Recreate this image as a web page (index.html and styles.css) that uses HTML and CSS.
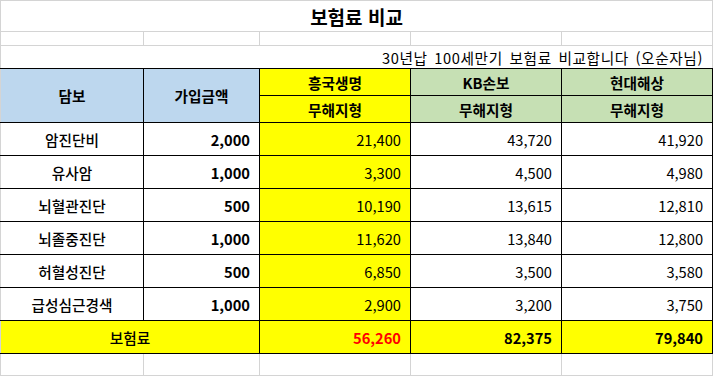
FILE: index.html
```html
<!DOCTYPE html>
<html lang="ko">
<head>
  <meta charset="UTF-8" />
  <title>보험료 비교</title>
  <meta name="viewport" content="width=device-width, initial-scale=1.0" />
  <link rel="stylesheet" href="styles.css">
</head>
<body>

<table class="sheet">
  <colgroup>
    <col class="col-name">
    <col class="col-amount">
    <col class="col-co">
    <col class="col-co">
    <col class="col-co">
  </colgroup>

  <tr class="row-title">
    <td colspan="5" class="title">보험료 비교</td>
  </tr>
  <tr class="row-gap">
    <td></td><td></td><td></td><td></td><td></td>
  </tr>
  <tr class="row-note">
    <td colspan="5" class="note">30년납 100세만기 보험료 비교합니다 (오순자님)</td>
  </tr>

  <tr class="row-head">
    <th rowspan="2" class="blue">담보</th>
    <th rowspan="2" class="blue">가입금액</th>
    <th class="yellow">흥국생명</th>
    <th class="green">KB손보</th>
    <th class="green">현대해상</th>
  </tr>
  <tr class="row-head">
    <th class="yellow">무해지형</th>
    <th class="green">무해지형</th>
    <th class="green">무해지형</th>
  </tr>

  <tr class="row-data">
    <td class="label">암진단비</td>
    <td class="num bold">2,000</td>
    <td class="num yellow">21,400</td>
    <td class="num">43,720</td>
    <td class="num">41,920</td>
  </tr>
  <tr class="row-data">
    <td class="label">유사암</td>
    <td class="num bold">1,000</td>
    <td class="num yellow">3,300</td>
    <td class="num">4,500</td>
    <td class="num">4,980</td>
  </tr>
  <tr class="row-data">
    <td class="label">뇌혈관진단</td>
    <td class="num bold">500</td>
    <td class="num yellow">10,190</td>
    <td class="num">13,615</td>
    <td class="num">12,810</td>
  </tr>
  <tr class="row-data">
    <td class="label">뇌졸중진단</td>
    <td class="num bold">1,000</td>
    <td class="num yellow">11,620</td>
    <td class="num">13,840</td>
    <td class="num">12,800</td>
  </tr>
  <tr class="row-data">
    <td class="label">허혈성진단</td>
    <td class="num bold">500</td>
    <td class="num yellow">6,850</td>
    <td class="num">3,500</td>
    <td class="num">3,580</td>
  </tr>
  <tr class="row-data">
    <td class="label">급성심근경색</td>
    <td class="num bold">1,000</td>
    <td class="num yellow">2,900</td>
    <td class="num">3,200</td>
    <td class="num">3,750</td>
  </tr>

  <tr class="row-data row-total">
    <td colspan="2" class="label">보험료</td>
    <td class="num bold red">56,260</td>
    <td class="num bold">82,375</td>
    <td class="num bold">79,840</td>
  </tr>

  <tr class="row-blank">
    <td></td><td></td><td></td><td></td><td></td>
  </tr>
</table>

</body>
</html>
```

FILE: styles.css
```css
* { margin: 0; padding: 0; box-sizing: border-box; }

body {
  font-family: "Noto Sans CJK KR", "Liberation Sans", sans-serif;
  font-size: 14.67px;
  color: #000;
  background: #fff;
}

.sheet {
  border-collapse: collapse;
  table-layout: fixed;
  width: 712px;
}

.col-name { width: 143px; }
.col-amount { width: 116px; }
.col-co { width: 151px; }

.sheet td,
.sheet th {
  border: 1px solid #d4d4d4;
  padding: 0 9px;
  white-space: nowrap;
  overflow: hidden;
  vertical-align: middle;
}

/* top area, outside the table */
.row-title { height: 31px; }
.row-gap { height: 14px; }
.row-note { height: 23px; }

.title {
  text-align: center;
  font-size: 19px;
  font-weight: bold;
}

.note {
  text-align: right;
  padding-right: 3px;
  letter-spacing: 0.6px;
  word-spacing: 2px;
  border-bottom-color: #000 !important;
}

/* table */
.row-head { height: 27px; }
.row-data { height: 33px; }
.row-blank { height: 22px; }

.row-head th,
.row-data td {
  border-color: #000;
}

.row-head th:first-child,
.row-data td:first-child {
  border-left-color: #d4d4d4;
}

.sheet th {
  font-weight: bold;
  text-align: center;
}

.label {
  text-align: center;
  font-weight: 500;
}

.num { text-align: right; }
.bold { font-weight: bold; }
.red { color: #ff0000; }

.blue { background: #bdd7ee; }
.green { background: #c6e0b4; }
.yellow,
.row-total td { background: #ffff00; }
```
